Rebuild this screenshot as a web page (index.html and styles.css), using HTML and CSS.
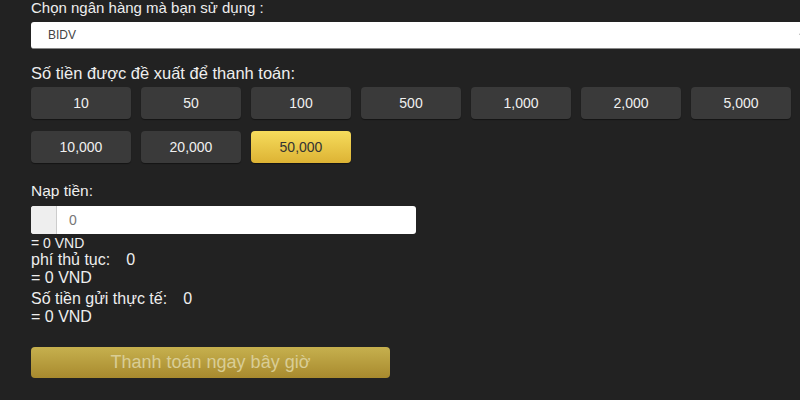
FILE: index.html
```html
<!DOCTYPE html>
<html lang="vi">
<head>
<meta charset="utf-8">
<link rel="stylesheet" href="styles.css">
</head>
<body>
<div class="page">
  <div class="label lbl-bank">Chọn ngân hàng mà bạn sử dụng :</div>
  <div class="select">
    <span>BIDV</span>
    <svg class="chev" width="12" height="8" viewBox="0 0 12 8"><path d="M1 1.5 L6 6 L11 1.5" fill="none" stroke="#444" stroke-width="2"/></svg>
  </div>
  <div class="label lbl-amount">Số tiền được đề xuất để thanh toán:</div>
  <div class="amounts">
    <div class="amt">10</div>
    <div class="amt">50</div>
    <div class="amt">100</div>
    <div class="amt">500</div>
    <div class="amt">1,000</div>
    <div class="amt">2,000</div>
    <div class="amt">5,000</div>
    <div class="amt">10,000</div>
    <div class="amt">20,000</div>
    <div class="amt active">50,000</div>
  </div>
  <div class="label lbl-deposit">Nạp tiền:</div>
  <div class="input">
    <div class="addon"></div>
    <div class="value">0</div>
  </div>
  <div class="line small">= 0 VND</div>
  <div class="line">phí thủ tục:<span class="num">0</span></div>
  <div class="line">= 0 VND</div>
  <div class="line actual">Số tiền gửi thực tế:<span class="num">0</span></div>
  <div class="line">= 0 VND</div>
  <div class="pay">Thanh toán ngay bây giờ</div>
</div>
</body>
</html>
```

FILE: styles.css
```css
html, body {
  margin: 0;
  padding: 0;
  background: #222222;
  overflow: hidden;
  width: 800px;
  height: 400px;
}
.page {
  padding: 0 0 0 31px;
  font-family: "Liberation Sans", Arial, sans-serif;
  color: #eeeeee;
}
.label {
  font-size: 15px;
  line-height: 17px;
}
.lbl-bank {
  margin-top: -1px;
}
.select {
  margin-top: 6px;
  width: 780px;
  height: 27px;
  background: #ffffff;
  border-radius: 3px;
  border-bottom: 1px solid #888;
  box-sizing: border-box;
  display: flex;
  align-items: center;
  justify-content: space-between;
  padding: 0 0 0 17px;
  color: #444;
  font-size: 12px;
}
.chev {
  margin-top: 1px;
}
.lbl-amount {
  margin-top: 16px;
  font-size: 16.5px;
}
.amounts {
  margin-top: 5px;
  display: grid;
  grid-template-columns: repeat(7, 100px);
  column-gap: 10px;
  row-gap: 12px;
}
.amt {
  height: 32px;
  background: #3a3a3a;
  border-radius: 4px;
  display: flex;
  align-items: center;
  justify-content: center;
  font-size: 14px;
  color: #f0f0f0;
  box-shadow: 0 1px 1px rgba(0,0,0,0.4);
}
.amt.active {
  background: linear-gradient(#f6dc5c, #ddb334);
  color: #333;
}
.lbl-deposit {
  margin-top: 19px;
  font-size: 15.5px;
}
.input {
  margin-top: 7px;
  width: 385px;
  height: 28px;
  background: #fff;
  border-radius: 3px;
  display: flex;
  overflow: hidden;
}
.addon {
  width: 25px;
  background: #eeeeee;
  border-right: 1px solid #ccc;
}
.value {
  padding-left: 12px;
  display: flex;
  align-items: center;
  font-size: 14px;
  color: #777;
}
.line {
  font-size: 16px;
  line-height: 18px;
}
.line .num {
  margin-left: 16px;
}
.line.small {
  font-size: 14px;
  line-height: 16px;
  margin-top: 1px;
}
.line.actual {
  margin-top: 3px;
}
.pay {
  margin-top: 21px;
  width: 359px;
  height: 31px;
  border-radius: 4px;
  background: linear-gradient(#c6b04e, #a88a2e);
  display: flex;
  align-items: center;
  justify-content: center;
  color: #d9cd95;
  font-size: 18px;
}
```
